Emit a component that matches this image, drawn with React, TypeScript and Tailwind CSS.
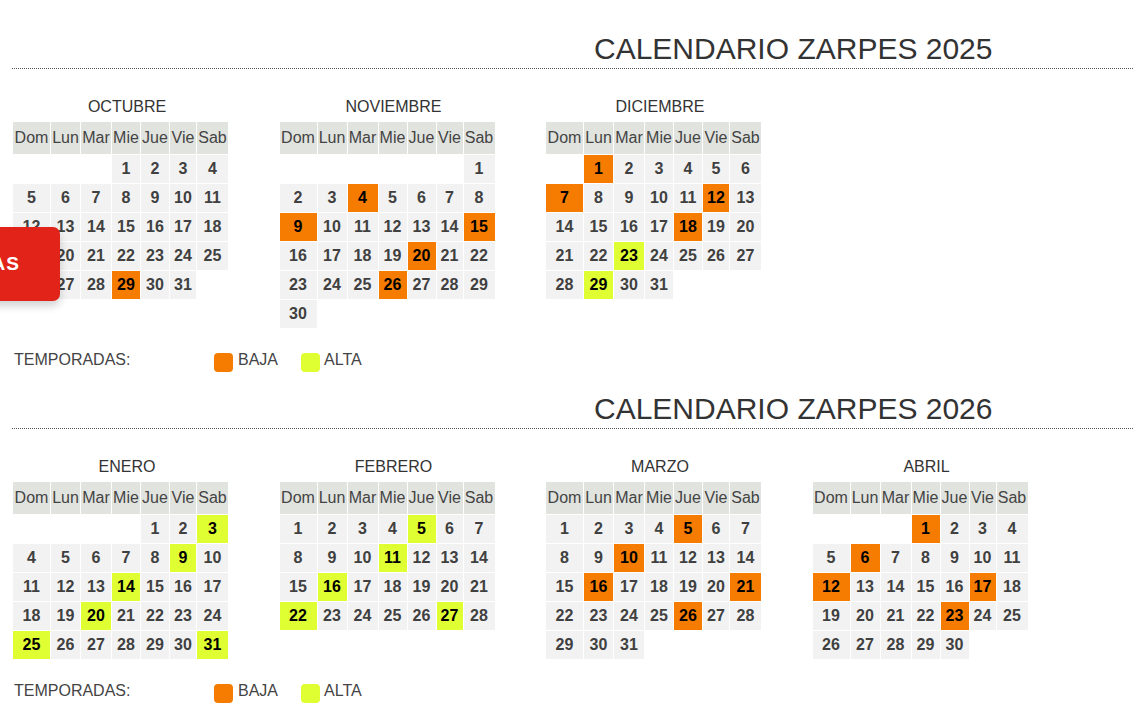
import React from "react";

type Month = {
  name: string;
  start: number; // 0 = Dom
  days: number;
  baja?: number[];
  alta?: number[];
};

const DAYS = ["Dom", "Lun", "Mar", "Mie", "Jue", "Vie", "Sab"];
// column widths as the original table lays them out
const COLS = ["w-[37px]", "w-[29px]", "w-[30px]", "w-[28px]", "w-[28px]", "w-[26px]", "w-[31px]"];

const Y2025: Month[] = [
  { name: "OCTUBRE", start: 3, days: 31, baja: [29] },
  { name: "NOVIEMBRE", start: 6, days: 30, baja: [4, 9, 15, 20, 26] },
  { name: "DICIEMBRE", start: 1, days: 31, baja: [1, 7, 12, 18], alta: [23, 29] },
];

const Y2026: Month[] = [
  { name: "ENERO", start: 4, days: 31, alta: [3, 9, 14, 20, 25, 31] },
  { name: "FEBRERO", start: 0, days: 28, alta: [5, 11, 16, 22, 27] },
  { name: "MARZO", start: 0, days: 31, baja: [5, 10, 16, 21, 26] },
  { name: "ABRIL", start: 3, days: 30, baja: [1, 6, 12, 17, 23] },
];

function weeks(m: Month) {
  const cells: (number | null)[] = [];
  for (let i = 0; i < m.start; i++) cells.push(null);
  for (let d = 1; d <= m.days; d++) cells.push(d);
  while (cells.length % 7) cells.push(null);
  const rows: (number | null)[][] = [];
  for (let i = 0; i < cells.length; i += 7) rows.push(cells.slice(i, i + 7));
  return rows;
}

function MonthTable({ m }: { m: Month }) {
  return (
    <div className="w-[266.5px] shrink-0">
      <div className="w-[230px] text-center text-[16px] leading-[18px] text-[#333] mb-[5px]">
        {m.name}
      </div>
      <table className="border-separate border-spacing-[1px] text-[16px]">
        <thead>
          <tr>
            {DAYS.map((d, i) => (
              <th key={d} className={`h-[32px] px-0 font-normal bg-[#e1e3df] text-[#444] ${COLS[i]}`}>
                {d}
              </th>
            ))}
          </tr>
        </thead>
        <tbody>
          {weeks(m).map((row, i) => (
            <tr key={i}>
              {row.map((d, j) => {
                if (d === null) return <td key={j} className="h-[28px] px-0" />;
                const baja = m.baja?.includes(d);
                const alta = m.alta?.includes(d);
                const cls = baja
                  ? "bg-[#f57c00] text-black"
                  : alta
                  ? "bg-[#e0ff33] text-black"
                  : "bg-[#f2f2f2] text-[#404040]";
                return (
                  <td key={j} className={`h-[28px] px-0 text-center font-bold ${cls}`}>
                    {d}
                  </td>
                );
              })}
            </tr>
          ))}
        </tbody>
      </table>
    </div>
  );
}

function Legend() {
  return (
    <div className="mt-[22px] flex items-start pl-[2px] text-[16px] leading-[18px] text-[#444]">
      <span className="w-[200px]">TEMPORADAS:</span>
      <span className="mt-[2px] h-[19px] w-[19px] rounded-[4px] bg-[#f57c00]" />
      <span className="ml-[5px]">BAJA</span>
      <span className="ml-[23px] mt-[2px] h-[19px] w-[19px] rounded-[4px] bg-[#e0ff33]" />
      <span className="ml-[4px]">ALTA</span>
    </div>
  );
}

function Year({ title, months }: { title: string; months: Month[] }) {
  return (
    <section className="pt-[20px]">
      <h2 className="border-b border-dotted border-[#555] pb-[2px] pl-[582px] text-[30px] leading-[34px] font-normal text-[#333]">
        {title}
      </h2>
      <div className="mt-[29px] flex">
        {months.map((m) => (
          <MonthTable key={m.name} m={m} />
        ))}
      </div>
      <Legend />
    </section>
  );
}

export default function App() {
  return (
    <div
      className="relative min-h-[720px] overflow-hidden bg-white pl-[12px] pt-[12px]"
      style={{ fontFamily: '"Liberation Sans", Arial, sans-serif' }}
    >
      <Year title="CALENDARIO ZARPES 2025" months={Y2025} />
      <Year title="CALENDARIO ZARPES 2026" months={Y2026} />

      <div className="absolute left-[-100px] top-[227px] flex h-[74px] w-[160px] items-center justify-end overflow-hidden rounded-[7px] bg-[#e2231a] pr-[40px] shadow-[0_5px_8px_rgba(0,0,0,0.18)]">
        <span className="whitespace-nowrap text-[19px] font-bold tracking-[1px] text-white">
          TARIFAS
        </span>
      </div>
    </div>
  );
}
